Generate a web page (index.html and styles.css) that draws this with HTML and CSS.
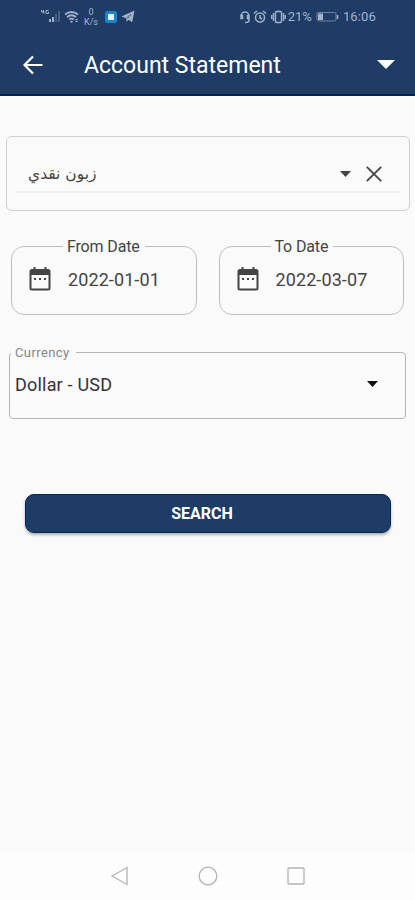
FILE: index.html
```html
<!DOCTYPE html>
<html lang="en">
<head>
<meta charset="utf-8">
<meta name="viewport" content="width=device-width, initial-scale=1">
<title>Account Statement</title>
<link rel="stylesheet" href="styles.css">
</head>
<body>
<div class="screen">
  <header class="header">
    <div class="status">
      <div class="status-left">
        <svg class="signal" width="20" height="16" viewBox="0 0 20 16"><g fill="none" stroke="currentColor"><path d="M2.500 2v3.500M.5 2v2h3M7.500 2.500H5v3h2.500V4"/></g><path d="M8 14v-3h2v3zM11 14V9h2v5z" fill="currentColor"/><path d="M14 14V6h2v8zM17 14V3h2v11z" fill="currentColor" opacity=".3"/></svg>
        <svg class="wifi" width="16" height="14" viewBox="0 0 16 14"><g fill="none" stroke="currentColor" stroke-width="1.800"><path d="M1 4.500Q7.500-.5 14 4.500M3 7q4.500-3.500 9 0M5.300 9.500q2.200-1.800 4.400 0"/></g><path d="M7.500 13l-1.700-2h3.400zM11 9l1.500 2L14 9zM11 12l1.500-2 1.500 2z" fill="currentColor"/></svg>
        <span class="rate"><span>0</span><span>K/s</span></span>
        <span class="app-badge"></span>
        <svg class="plane" width="14" height="13" viewBox="0 0 14 13"><path d="M.5 6.500L13.500.5l-2.300 11.800-3.600-2.500-2 2-.5-3.600z" fill="currentColor"/><path d="M5 8.200l5-4-3.500 4.700" fill="none" stroke="#1f3c67" stroke-width=".5"/></svg>
      </div>
      <div class="status-right">
        <svg class="headset" width="12" height="14" viewBox="0 0 12 14"><path d="M2 8V6a4 4 0 0 1 8 0v4.500q0 2-4 2M2 5.500v3h1.500v-3zM10 5.500v3H8.500v-3z" fill="none" stroke="currentColor" stroke-width="1.500"/></svg>
        <svg class="alarm" width="14" height="14" viewBox="0 0 14 14"><g fill="none" stroke="currentColor" stroke-width="1.500"><circle cx="7" cy="7.500" r="4.500"/><path d="M7 5v3l2 1M1 3.500L4 1M10 1l3 2.500"/></g></svg>
        <svg class="vibrate" width="15" height="14" viewBox="0 0 15 14"><g fill="none" stroke="currentColor" stroke-width="1.400"><rect x="4.500" y="1.500" width="6" height="11" rx="1"/><path d="M2.500 3v8M.7 5v4M12.500 3v8M14.300 5v4"/></g></svg>
        <span class="percent">21%</span>
        <svg class="battery" width="24" height="12" viewBox="0 0 24 12"><rect x="1" y="1.500" width="19" height="8.500" rx="1.500" fill="none" stroke="currentColor" opacity=".6"/><path d="M2 2.500h5v6.500H2z" fill="currentColor"/><path d="M21.500 4v4" stroke="currentColor" stroke-width="1.500"/></svg>
        <span class="clock">16:06</span>
      </div>
    </div>
    <div class="appbar">
      <svg class="back" width="22" height="20" viewBox="0 0 22 20"><path d="M20.500 10H2.500M11 1.500L2.500 10l8.500 8.500" fill="none" stroke="currentColor" stroke-width="2.200"/></svg>
      <h1 class="title">Account Statement</h1>
      <svg class="more" width="18" height="9" viewBox="0 0 18 9"><path d="M0 0h18L9 9z" fill="currentColor"/></svg>
    </div>
  </header>
  <main class="content">
    <section class="customer">
      <div class="customer-row">
        <span class="customer-name" lang="ar" dir="rtl">زبون نقدي</span>
        <svg class="caret" width="11" height="6" viewBox="0 0 11 6"><path d="M0 0h11L5.500 6z" fill="currentColor"/></svg>
        <svg class="clear" width="16" height="16" viewBox="0 0 16 16"><path d="M.8.800l14.400 14.400M15.200.800L.8 15.200" fill="none" stroke="currentColor" stroke-width="1.800"/></svg>
      </div>
    </section>
    <div class="dates">
      <fieldset class="date">
        <legend>From Date</legend>
        <div class="date-row">
          <svg width="22" height="24" viewBox="0 0 22 24"><path d="M4.500 0h2v2h9V0h2v2H19q2.500 0 2.500 2.500V21q0 2.500-2.500 2.500H3Q.5 23.500.5 21V4.500Q.5 2 3 2h1.500zM2.500 8v13q0 .5.500.5h16q.5 0 .5-.5V8z" fill="currentColor" fill-rule="evenodd"/><path d="M5 11h2v2H5zM10 11h2v2h-2zM15 11h2v2h-2z" fill="currentColor"/></svg>
          <span>2022-01-01</span>
        </div>
      </fieldset>
      <fieldset class="date">
        <legend>To Date</legend>
        <div class="date-row">
          <svg width="22" height="24" viewBox="0 0 22 24"><path d="M4.500 0h2v2h9V0h2v2H19q2.500 0 2.500 2.500V21q0 2.500-2.500 2.500H3Q.5 23.500.5 21V4.500Q.5 2 3 2h1.500zM2.500 8v13q0 .5.500.5h16q.5 0 .5-.5V8z" fill="currentColor" fill-rule="evenodd"/><path d="M5 11h2v2H5zM10 11h2v2h-2zM15 11h2v2h-2z" fill="currentColor"/></svg>
          <span>2022-03-07</span>
        </div>
      </fieldset>
    </div>
    <fieldset class="currency">
      <legend>Currency</legend>
      <div class="currency-row">
        <span>Dollar - USD</span>
        <svg width="11" height="6" viewBox="0 0 11 6"><path d="M0 0h11L5.500 6z" fill="currentColor"/></svg>
      </div>
    </fieldset>
    <button class="search" type="button">SEARCH</button>
  </main>
  <nav class="navbar">
    <svg width="20" height="20" viewBox="0 0 20 20"><path d="M17 1.500v17L2 10z"/></svg>
    <svg width="20" height="20" viewBox="0 0 20 20"><circle cx="10" cy="10" r="8.800"/></svg>
    <svg width="20" height="20" viewBox="0 0 20 20"><rect x="2" y="2" width="16" height="16" rx="1"/></svg>
  </nav>
</div>
</body>
</html>
```
FILE: styles.css
```css
* { box-sizing: border-box; }
body {
  margin: 0;
  background: #fafafa;
  color: #444;
  font-family: Roboto, "Liberation Sans", sans-serif;
}
svg { display: block; flex: none; }
.screen { display: flex; flex-direction: column; height: 900px; }
.header {
  height: 96px;
  background: #1f3c67;
  border-bottom: 2px solid #04225a;
  color: #fff;
}
.status {
  display: flex;
  justify-content: space-between;
  height: 33px;
  padding: 0 39px 0 41px;
  color: #a3b3cb;
}
.status-left, .status-right { display: flex; align-items: center; }
.signal { margin-top: -1px; }
.wifi { margin-left: 3px; }
.rate {
  display: flex;
  flex-direction: column;
  align-items: center;
  width: 14px;
  margin-left: 4px;
  font-size: 9px;
  line-height: 10px;
}
.app-badge {
  width: 12px;
  height: 12px;
  margin-left: 7px;
  border: 3px solid #1683d3;
  border-radius: 2px;
  background: #e6f5ff;
}
.plane { margin-left: 4px; }
.alarm { margin-left: 2px; }
.vibrate { margin-left: 4px; }
.percent { margin-left: 2px; font-size: 13px; }
.battery { margin-left: 4px; }
.clock { margin-left: 3px; font-size: 13px; letter-spacing: .15px; }
.appbar { display: flex; align-items: center; height: 63px; padding: 0 20px 0 22px; }
.title {
  flex: 1;
  margin: 2px 0 0 40px;
  font-size: 23px;
  font-weight: 400;
  line-height: 28px;
}
.content { flex: 1; padding-top: 40px; }
.customer {
  height: 75px;
  margin: 0 5px 0 6px;
  padding: 19px 9px 0 8px;
  border: 1px solid #cfcfcf;
  border-radius: 6px;
}
.customer-row {
  display: flex;
  align-items: center;
  height: 37px;
  padding: 0 18px 0 13px;
  border-bottom: 2px solid #efefef;
}
.customer-name {
  margin-right: auto;
  font-family: "DejaVu Sans", sans-serif;
  font-size: 15.500px;
}
.clear { margin-left: 15px; }
fieldset { min-width: 0; margin: 0; padding: 0; border: 1px solid #b5b5b5; }
legend { line-height: 19px; }
.dates { display: flex; gap: 22px; margin: 26px 11px 0; }
.date { flex: 1; height: 78px; border-color: #bfbfbf; border-radius: 13px; }
.date legend { margin-left: 51px; padding: 0 5px 0 4px; font-size: 16px; letter-spacing: -.15px; }
.date-row {
  display: flex;
  align-items: center;
  gap: 17px;
  height: 30px;
  padding: 0 0 0 17px;
  margin-top: 8px;
  font-size: 18px;
  letter-spacing: .1px;
}
.currency { height: 76px; margin: 28px 9px 0; border-radius: 4px; }
.currency legend { margin-left: 1px; padding: 0 6px 0 4px; color: #858585; font-size: 13px; letter-spacing: .4px; }
.currency-row {
  display: flex;
  align-items: center;
  justify-content: space-between;
  height: 30px;
  margin-top: 7px;
  padding: 0 27px 0 5px;
  color: #333;
  font-size: 18px;
  letter-spacing: .2px;
}
.currency-row svg { color: #111; }
.search {
  display: block;
  width: 366px;
  height: 39px;
  margin: 75px 0 0 25px;
  padding: 0 12px 0 0;
  border: 1px solid #08265b;
  border-radius: 9px;
  background: #1f3c67;
  box-shadow: 0 2px 3px rgba(0, 0, 0, .3);
  color: #fff;
  font: 700 16px Roboto, sans-serif;
}
.navbar {
  display: flex;
  align-items: center;
  justify-content: center;
  gap: 68px;
  height: 48px;
  background: #fdfdfd;
}
.navbar svg { fill: none; stroke: #b3b3b3; stroke-width: 1.3; }
```
